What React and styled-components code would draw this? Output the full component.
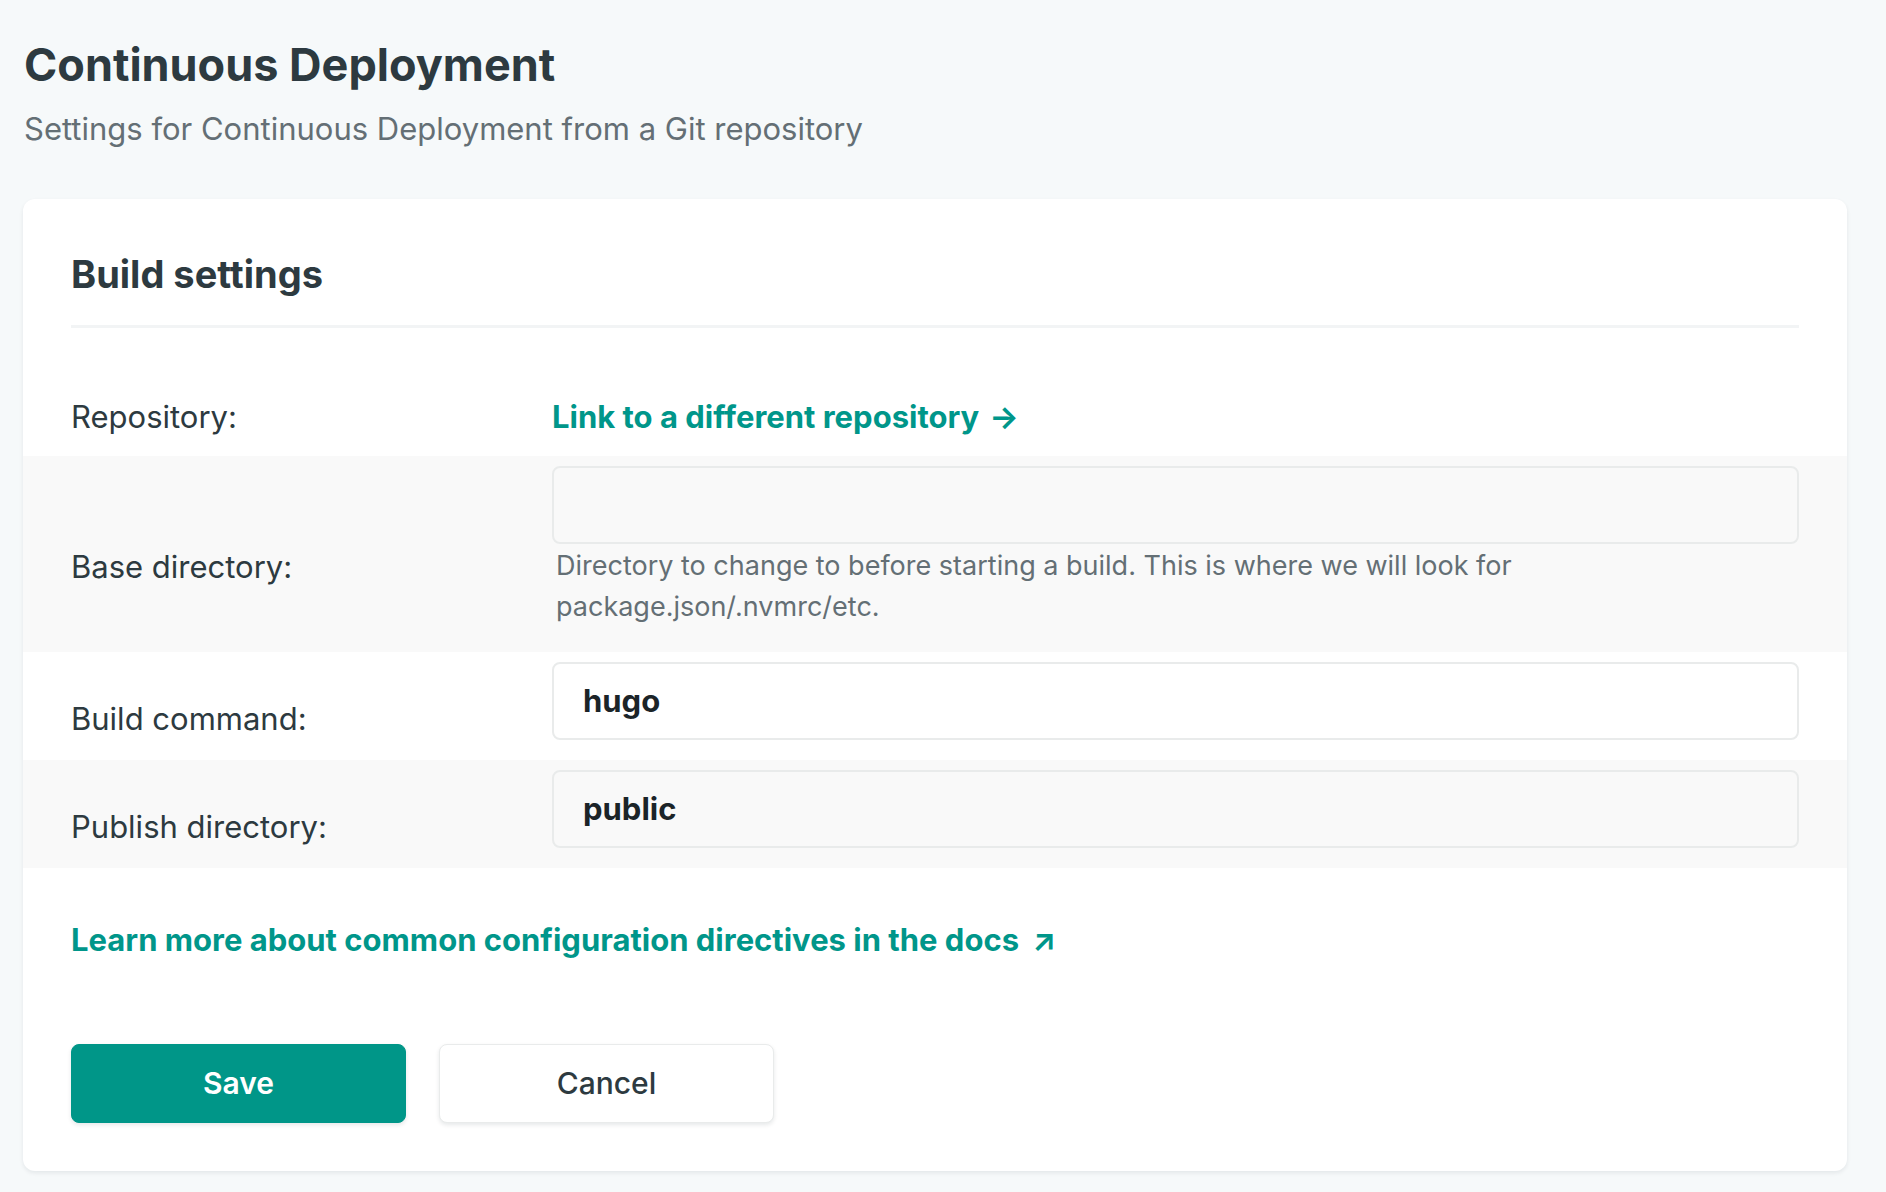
import styled, { createGlobalStyle } from "styled-components"

const GlobalStyle = createGlobalStyle`
    * { box-sizing: border-box; }
    html, body {
        margin: 0;
        padding: 0;
        background: #f6f9fa;
    }
    body {
        font-family: Inter, "Noto Sans", "Liberation Sans", sans-serif;
        color: #2d3a40;
    }
`

const Page = styled.div`
    padding: 38px 39px 21px 23px;
`

const Header = styled.header`
    padding-left: 1px;
    margin-bottom: 52px;
`

const Title = styled.h1`
    margin: 0;
    font-size: 45px;
    line-height: 1.2;
    font-weight: 700;
    color: #2d3a40;
`

const Subtitle = styled.p`
    margin: 18px 0 0;
    font-size: 31px;
    line-height: 1.2;
    font-weight: 400;
    color: #646f75;
`

const Card = styled.section`
    background: #ffffff;
    border-radius: 12px;
    box-shadow: 0 2px 4px rgba(14, 30, 37, 0.08);
    padding-bottom: 48px;
`

const CardHeader = styled.div`
    margin: 0 48px;
    padding-top: 53px;
    padding-bottom: 27px;
    border-bottom: 3px solid #f2f4f5;
`

const CardTitle = styled.h2`
    margin: 0;
    font-size: 38px;
    line-height: 1.2;
    font-weight: 700;
    color: #2d3a40;
`

const Fields = styled.div`
    margin-top: 59px;
`

const Row = styled.div`
    display: grid;
    grid-template-columns: 481px 1fr;
    align-items: ${p => (p.$plain ? "baseline" : "center")};
    padding: 10px 48px ${p => (p.$plain ? "19px" : "20px")};
    background: ${p => (p.$shaded ? "#f9f9f9" : "transparent")};
`

const Label = styled.label`
    font-size: 31px;
    line-height: 40px;
    color: #2d3a40;
    padding-top: ${p => (p.$plain ? "0" : "37px")};
`

const Field = styled.div`
    display: flex;
    flex-direction: column;
`

const Input = styled.input`
    height: 78px;
    width: 100%;
    border: 2px solid #e9ebeb;
    border-radius: 8px;
    background: transparent;
    padding: 0 29px;
    font-family: inherit;
    font-size: 31px;
    font-weight: 700;
    color: #1b2428;
    outline: none;
`

const Help = styled.p`
    margin: 1px 0 5px;
    padding-left: 4px;
    max-width: 1100px;
    font-size: 27px;
    line-height: 41px;
    color: #646f75;
`

const TealLink = styled.a`
    font-size: 31px;
    line-height: 40px;
    font-weight: 700;
    color: #00968a;
    text-decoration: none;
    cursor: pointer;
`

const Arrow = styled.span`
    margin-left: ${p => p.$gap || "10px"};
`

const Docs = styled.div`
    margin: 52px 48px 0;
`

const Actions = styled.div`
    display: flex;
    gap: 33px;
    margin: 84px 48px 0;
`

const Button = styled.button`
    width: 335px;
    height: 79px;
    border-radius: 8px;
    font-family: inherit;
    font-size: 30px;
    cursor: pointer;
    border: ${p => (p.$primary ? "1px solid #009688" : "1px solid #e9ebeb")};
    background: ${p => (p.$primary ? "#009688" : "#ffffff")};
    color: ${p => (p.$primary ? "#ffffff" : "#2d3a40")};
    font-weight: ${p => (p.$primary ? 600 : 500)};
    box-shadow: 0 2px 4px rgba(14, 30, 37, 0.1);
`

function App() {
    return (
        <>
            <GlobalStyle />
            <Page>
                <Header>
                    <Title>Continuous Deployment</Title>
                    <Subtitle>Settings for Continuous Deployment from a Git repository</Subtitle>
                </Header>
                <Card>
                    <CardHeader>
                        <CardTitle>Build settings</CardTitle>
                    </CardHeader>
                    <Fields>
                        <Row $plain>
                            <Label $plain>Repository:</Label>
                            <div>
                                <TealLink>Link to a different repository<Arrow>→</Arrow></TealLink>
                            </div>
                        </Row>
                        <Row $shaded>
                            <Label>Base directory:</Label>
                            <Field>
                                <Input defaultValue="" />
                                <Help>Directory to change to before starting a build. This is where we will look for package.json/.nvmrc/etc.</Help>
                            </Field>
                        </Row>
                        <Row>
                            <Label>Build command:</Label>
                            <Field>
                                <Input defaultValue="hugo" />
                            </Field>
                        </Row>
                        <Row $shaded>
                            <Label>Publish directory:</Label>
                            <Field>
                                <Input defaultValue="public" />
                            </Field>
                        </Row>
                    </Fields>
                    <Docs>
                        <TealLink>Learn more about common configuration directives in the docs<Arrow $gap="13px">↗</Arrow></TealLink>
                    </Docs>
                    <Actions>
                        <Button $primary>Save</Button>
                        <Button>Cancel</Button>
                    </Actions>
                </Card>
            </Page>
        </>
    )
}

export default App
